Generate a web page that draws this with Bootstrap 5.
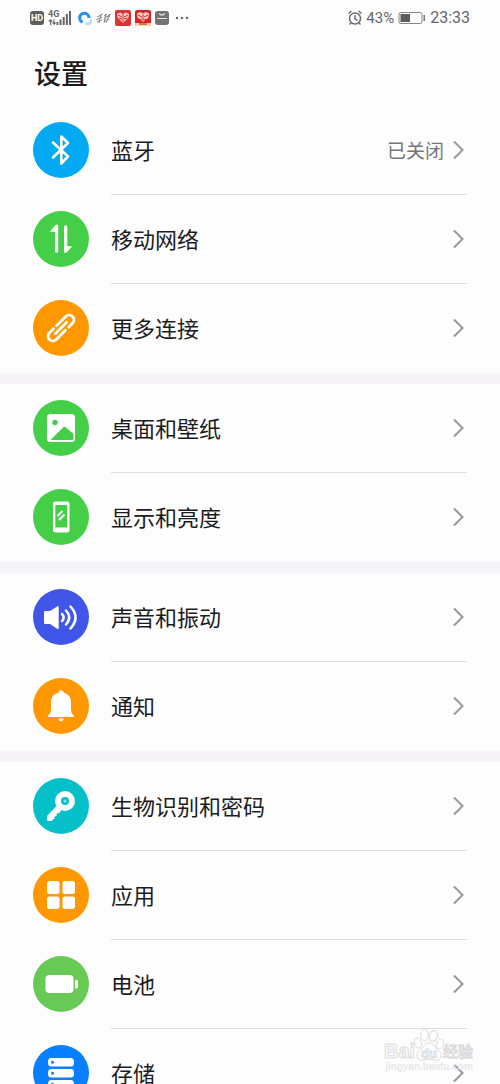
<!DOCTYPE html>
<html lang="zh-CN">
<head>
<meta charset="utf-8">
<meta name="viewport" content="width=device-width, initial-scale=1">
<title>设置</title>
<link href="https://cdn.jsdelivr.net/npm/bootstrap@5.3.0/dist/css/bootstrap.min.css" rel="stylesheet">
<style>
  body { font-family: Roboto, "Noto Sans CJK SC", sans-serif; background: #fdfdfd; color: #1b1b1d; }
  .screen { height: 100vh; }
  .status-bar { height: 36px; padding: 0 30px; color: #66666a; }
  .status-bar svg { display: block; flex: none; }
  .hd-tag { width: 14px; height: 14px; border-radius: 3px; background: #5d5d5f; color: #fff; font: 700 9px/14px Roboto, sans-serif; text-align: center; }
  .net-type { font: 700 9px/9px Roboto, sans-serif; }
  .status-text { font-size: 15px; line-height: 20px; }
  .clock { font-size: 16px; line-height: 20px; }
  .page-title { font-size: 27px; line-height: 36px; font-weight: 500; padding: 21px 34px 13px; margin: 0; }
  .settings-group + .settings-group { border-top: 11px solid #f6f4f9; }
  .setting { height: 89px; padding: 0 33px; gap: 22px; color: inherit; }
  .setting-icon { width: 56px; height: 56px; margin-bottom: 2px; background: var(--tone); color: var(--tone); }
  .setting-icon svg { display: block; }
  .setting-body { border-bottom: 1px solid #dfdfe1; font-size: 22px; line-height: 32px; }
  .setting-name, .setting-value { padding-top: 3px; }
  .settings-group > :last-child .setting-body { border-color: transparent; }
  .setting-value { font-size: 19px; color: #77777a; }
  .blue { --tone: #03a9f2; } .green { --tone: #45cf48; } .orange { --tone: #ff9800; }
  .indigo { --tone: #4056e8; } .teal { --tone: #05c0c9; } .leaf { --tone: #69c955; } .azure { --tone: #087fff; }
  .watermark { right: 22px; bottom: 9px; width: 98px; height: 48px; pointer-events: none; }
</style>
</head>
<body>
<div class="screen position-relative overflow-hidden">
  <header class="status-bar d-flex align-items-center justify-content-between">
    <div class="d-flex align-items-center gap-1">
      <span class="hd-tag">HD</span>
      <svg width="25" height="18" viewBox="0 0 25 18" fill="#66666a" aria-hidden="true"><text class="net-type" x="0" y="8">4G</text><path d="M2.500 10 5 12.500H3.200V16H2V12.500H0zM6 16 3.800 13.500H5.300V10.500H6.500V13.500H8.500zM8.500 13h1.800v3H8.500zM11.500 10.500h2V16h-2zM14.700 8h2v8h-2zM17.900 5h2v11h-2zM21 2h2v14h-2z"/></svg>
      <svg width="15" height="16" viewBox="0 0 16 16" fill="none" aria-hidden="true"><path d="M9 14h4a2.500 2.500 0 0 0 1-4.500" stroke="#b8dcf8" stroke-width="3"/><path d="M6 12.500A5 5 0 1 1 12.800 8" stroke="#2590ee" stroke-width="3.200"/></svg>
      <svg width="15" height="14" viewBox="0 0 15 14" fill="none" stroke="#858588" aria-hidden="true"><path d="M1 6l6-3M0 9l6-3M5 3 3 12M1 11l5-2M8 5l3-2M10 3 8 12M8 8l5-4M11 6l4-3M13 5l-3 7M9 10l4-2M14 3l-1 3"/></svg>
      <svg width="16" height="16" viewBox="0 0 16 16" aria-hidden="true"><rect width="16" height="16" rx="2" fill="#dc3234"/><path d="M8 13 2.500 7.500 2 4l3-1.500L8 4l3-1.500L14 4l-.5 3.500z" fill="#f9c8c2"/><path d="M8 4v8M3 5l4 2M13 5 9 7M4 8l3 1M12 8 9 9" stroke="#dc3234"/></svg>
      <svg width="16" height="16" viewBox="0 0 16 16" aria-hidden="true"><rect width="16" height="16" rx="2" fill="#d92327"/><path d="M8 12 2.500 7.500 2 3.500 5 2l3 1.500L11 2l3 1.500-.5 4z" fill="#f9d0c6"/><path d="M8 4v7M3 5l4 2M13 5 9 7M5 9l2 1M11 9 9 10" stroke="#d92327"/><path d="M0 13h16v1a2 2 0 0 1-2 2H2a2 2 0 0 1-2-2z" fill="#f3d8a5"/><path d="M4 14h8" stroke="#cf5630" stroke-width="1.500"/></svg>
      <svg width="14" height="14" viewBox="0 0 14 14" fill="none" aria-hidden="true"><rect width="14" height="14" rx="3" fill="#737376"/><path d="M4 2.500q3 3 6 0M2 7.500h10" stroke="#e2e2e3" stroke-width="1.200"/></svg>
      <svg width="16" height="4" viewBox="0 0 16 4" fill="#66666a" aria-hidden="true"><circle cx="4" cy="2" r="1.200"/><circle cx="9" cy="2" r="1.200"/><circle cx="14" cy="2" r="1.200"/></svg>
    </div>
    <div class="d-flex align-items-center gap-1">
      <svg width="14" height="16" viewBox="0 0 14 16" fill="none" stroke="#66666a" stroke-width="1.400" aria-hidden="true"><circle cx="7" cy="8.500" r="5.500"/><path d="M7 5v4l2.500 1.500M.5 3.500l3-2.500M13.500 3.500l-3-2.500M3 13l-1.500 1.500M11 13l1.500 1.500"/></svg>
      <span class="status-text">43%</span>
      <svg width="28" height="14" viewBox="0 0 28 14" aria-hidden="true"><rect x="1" y="1.500" width="23" height="11" rx="1.500" fill="none" stroke="#858588"/><path d="M2.500 3H12v8H2.500z" fill="#5d5d5f"/><path d="M25.500 4h1.500v6h-1.500z" fill="#77777a"/></svg>
      <span class="clock">23:33</span>
    </div>
  </header>

  <h1 class="page-title">设置</h1>

  <main>
    <section class="settings-group">
      <a href="#bluetooth" class="setting blue d-flex text-decoration-none">
        <span class="setting-icon rounded-circle flex-shrink-0 align-self-center"><svg width="56" height="56" viewBox="0 0 56 56" fill="none" stroke="#fff" stroke-width="2.600" stroke-linejoin="round" stroke-linecap="round"><path d="M20 20.500 35 34.500 28.300 41.500V14.500L35 21 20 35.500"/></svg></span>
        <span class="setting-body d-flex flex-grow-1 align-items-center"><span class="setting-name">蓝牙</span><span class="setting-value ms-auto">已关闭</span><svg class="ms-2" width="15" height="20" viewBox="0 0 15 20" fill="none" stroke="#98989b" stroke-width="2"><path d="m2 1.500 8.500 8.500L2 18.500"/></svg></span>
      </a>
      <a href="#mobile" class="setting green d-flex text-decoration-none">
        <span class="setting-icon rounded-circle flex-shrink-0 align-self-center"><svg width="56" height="56" viewBox="0 0 56 56" fill="#fff"><path d="M16.800 20.800 22.300 14.300q2.900-2 2.900.8V40.500q0 1.300-1.600 1.300T22 40.500V20.800zM39.200 35.200 34 41.200q-2.900 2-2.900-.8V15.500q0-1.300 1.600-1.300t1.600 1.300v19.700z"/></svg></span>
        <span class="setting-body d-flex flex-grow-1 align-items-center"><span class="setting-name">移动网络</span><svg class="ms-auto" width="15" height="20" viewBox="0 0 15 20" fill="none" stroke="#98989b" stroke-width="2"><path d="m2 1.500 8.500 8.500L2 18.500"/></svg></span>
      </a>
      <a href="#connections" class="setting orange d-flex text-decoration-none">
        <span class="setting-icon rounded-circle flex-shrink-0 align-self-center"><svg width="56" height="56" viewBox="0 0 56 56" fill="none" stroke="#fff" stroke-width="2.800" stroke-linecap="round"><g transform="translate(28 28) rotate(-45)"><path d="M-1.500-4.800H11.500a4.800 4.800 0 0 1 0 9.600H6M1.500 4.800H-11.500a4.800 4.800 0 0 1 0-9.600H-6M-8 0H8"/></g></svg></span>
        <span class="setting-body d-flex flex-grow-1 align-items-center"><span class="setting-name">更多连接</span><svg class="ms-auto" width="15" height="20" viewBox="0 0 15 20" fill="none" stroke="#98989b" stroke-width="2"><path d="m2 1.500 8.500 8.500L2 18.500"/></svg></span>
      </a>
    </section>

    <section class="settings-group">
      <a href="#wallpaper" class="setting green d-flex text-decoration-none">
        <span class="setting-icon rounded-circle flex-shrink-0 align-self-center"><svg width="56" height="56" viewBox="0 0 56 56"><rect x="14" y="14" width="28" height="28" rx="3.500" fill="#fff"/><circle cx="22" cy="22.500" r="2.700" fill="currentColor"/><path d="M17.500 40 30 27.500q1.500-1.300 3 0L40.500 34v4.500q0 1.500-1.500 1.500z" fill="currentColor"/></svg></span>
        <span class="setting-body d-flex flex-grow-1 align-items-center"><span class="setting-name">桌面和壁纸</span><svg class="ms-auto" width="15" height="20" viewBox="0 0 15 20" fill="none" stroke="#98989b" stroke-width="2"><path d="m2 1.500 8.500 8.500L2 18.500"/></svg></span>
      </a>
      <a href="#display" class="setting green d-flex text-decoration-none">
        <span class="setting-icon rounded-circle flex-shrink-0 align-self-center"><svg width="56" height="56" viewBox="0 0 56 56"><rect x="20" y="12.500" width="16.500" height="31" rx="2.500" fill="#fff"/><path d="M22.300 16h11.900v22.500H22.300z" fill="currentColor"/><path d="m24.500 27 5-5M26 31l5.500-5.500" stroke="#fff" stroke-width="2"/></svg></span>
        <span class="setting-body d-flex flex-grow-1 align-items-center"><span class="setting-name">显示和亮度</span><svg class="ms-auto" width="15" height="20" viewBox="0 0 15 20" fill="none" stroke="#98989b" stroke-width="2"><path d="m2 1.500 8.500 8.500L2 18.500"/></svg></span>
      </a>
    </section>

    <section class="settings-group">
      <a href="#sound" class="setting indigo d-flex text-decoration-none">
        <span class="setting-icon rounded-circle flex-shrink-0 align-self-center"><svg width="56" height="56" viewBox="0 0 56 56" fill="none" stroke="#fff" stroke-width="2.500" stroke-linecap="round"><path d="M12 22h5l7.500-4.700q1.200-.6 1.200.8v21q0 1.400-1.200.8L17 35h-5q-1 0-1-1V23q0-1 1-1z" fill="#fff" stroke="none"/><path d="M29 25q3.500 3.500 0 7M33 21.500q6.500 7 0 14M37.500 17.500q10 11 0 22"/></svg></span>
        <span class="setting-body d-flex flex-grow-1 align-items-center"><span class="setting-name">声音和振动</span><svg class="ms-auto" width="15" height="20" viewBox="0 0 15 20" fill="none" stroke="#98989b" stroke-width="2"><path d="m2 1.500 8.500 8.500L2 18.500"/></svg></span>
      </a>
      <a href="#notifications" class="setting orange d-flex text-decoration-none">
        <span class="setting-icon rounded-circle flex-shrink-0 align-self-center"><svg width="56" height="56" viewBox="0 0 56 56" fill="#fff"><path d="M25.500 14.800a2.500 2.500 0 0 1 5 0C35.500 16 38 19.500 38 24v8q0 3 3 6v1H15v-1q3-3 3-6v-8c0-4.500 2.500-8 7.500-9.200zM25.300 40.500h5.400q-.5 2.800-2.700 2.800t-2.700-2.800z"/></svg></span>
        <span class="setting-body d-flex flex-grow-1 align-items-center"><span class="setting-name">通知</span><svg class="ms-auto" width="15" height="20" viewBox="0 0 15 20" fill="none" stroke="#98989b" stroke-width="2"><path d="m2 1.500 8.500 8.500L2 18.500"/></svg></span>
      </a>
    </section>

    <section class="settings-group">
      <a href="#security" class="setting teal d-flex text-decoration-none">
        <span class="setting-icon rounded-circle flex-shrink-0 align-self-center"><svg width="56" height="56" viewBox="0 0 56 56"><path d="m23.500 28 5 4.500-3 3-1.500-.5-.5 3-2 .5v2L18.500 43H15q-1 0-1-1v-4z" fill="#fff"/><circle cx="32" cy="23" r="10" fill="#fff"/><circle cx="32" cy="23" r="4" fill="currentColor"/><circle cx="32" cy="23" r="1.500" fill="#8ce2e5"/></svg></span>
        <span class="setting-body d-flex flex-grow-1 align-items-center"><span class="setting-name">生物识别和密码</span><svg class="ms-auto" width="15" height="20" viewBox="0 0 15 20" fill="none" stroke="#98989b" stroke-width="2"><path d="m2 1.500 8.500 8.500L2 18.500"/></svg></span>
      </a>
      <a href="#apps" class="setting orange d-flex text-decoration-none">
        <span class="setting-icon rounded-circle flex-shrink-0 align-self-center"><svg width="56" height="56" viewBox="0 0 56 56" fill="#fff"><rect x="14" y="14" width="12.500" height="13" rx="2.500"/><rect x="29.500" y="14" width="12.500" height="13" rx="2.500"/><rect x="14" y="29.500" width="12.500" height="12.500" rx="2.500"/><rect x="29.500" y="29.500" width="12.500" height="12.500" rx="2.500"/></svg></span>
        <span class="setting-body d-flex flex-grow-1 align-items-center"><span class="setting-name">应用</span><svg class="ms-auto" width="15" height="20" viewBox="0 0 15 20" fill="none" stroke="#98989b" stroke-width="2"><path d="m2 1.500 8.500 8.500L2 18.500"/></svg></span>
      </a>
      <a href="#battery" class="setting leaf d-flex text-decoration-none">
        <span class="setting-icon rounded-circle flex-shrink-0 align-self-center"><svg width="56" height="56" viewBox="0 0 56 56" fill="#fff"><rect x="12.500" y="19" width="28" height="18" rx="4"/><rect x="42" y="24" width="3" height="8.500" rx="1"/></svg></span>
        <span class="setting-body d-flex flex-grow-1 align-items-center"><span class="setting-name">电池</span><svg class="ms-auto" width="15" height="20" viewBox="0 0 15 20" fill="none" stroke="#98989b" stroke-width="2"><path d="m2 1.500 8.500 8.500L2 18.500"/></svg></span>
      </a>
      <a href="#storage" class="setting azure d-flex text-decoration-none">
        <span class="setting-icon rounded-circle flex-shrink-0 align-self-center"><svg width="56" height="56" viewBox="0 0 56 56"><g fill="#fff"><rect x="15" y="13" width="26" height="8.500" rx="3.500"/><rect x="15" y="24" width="26" height="8.500" rx="3.500"/><rect x="15" y="35" width="26" height="8.500" rx="3.500"/></g><g fill="currentColor"><circle cx="19.500" cy="17.300" r="1.500"/><circle cx="19.500" cy="28.300" r="1.500"/><circle cx="19.500" cy="39.300" r="1.500"/></g></svg></span>
        <span class="setting-body d-flex flex-grow-1 align-items-center"><span class="setting-name">存储</span><svg class="ms-auto" width="15" height="20" viewBox="0 0 15 20" fill="none" stroke="#98989b" stroke-width="2"><path d="m2 1.500 8.500 8.500L2 18.500"/></svg></span>
      </a>
    </section>
  </main>

  <div class="watermark position-absolute">
    <svg width="98" height="48" viewBox="0 0 98 48" fill="#fdfdfd" stroke="#dcdcde" stroke-width="1" font-family="'Liberation Sans', 'Noto Sans CJK SC', sans-serif">
      <text x="4" y="31" font-size="20" font-weight="700">Bai</text>
      <path d="M49 16c4 0 5 3 8 6s5 4 4 8-5 4-7 3-8-1-10 0-7 0-7-4 2-5 5-8 3-5 7-5z"/><ellipse cx="44.500" cy="8" rx="4" ry="5.500"/><ellipse cx="53.500" cy="9" rx="4" ry="5.500" transform="rotate(15 53.500 9)"/><ellipse cx="38" cy="16" rx="3.500" ry="5" transform="rotate(-15 38 16)"/><ellipse cx="60" cy="17" rx="3.500" ry="5" transform="rotate(20 60 17)"/>
      <text x="41" y="31" font-size="13" font-weight="700">du</text>
      <text x="63" y="30" font-size="15" font-weight="500" fill="#e9e9eb">经验</text>
      <text x="5" y="43" font-size="10" font-weight="700" fill="#e8e8ea" stroke="none">jingyan.baidu.com</text>
    </svg>
  </div>
</div>
<script src="https://cdn.jsdelivr.net/npm/bootstrap@5.3.0/dist/js/bootstrap.bundle.min.js"></script>
</body>
</html>
